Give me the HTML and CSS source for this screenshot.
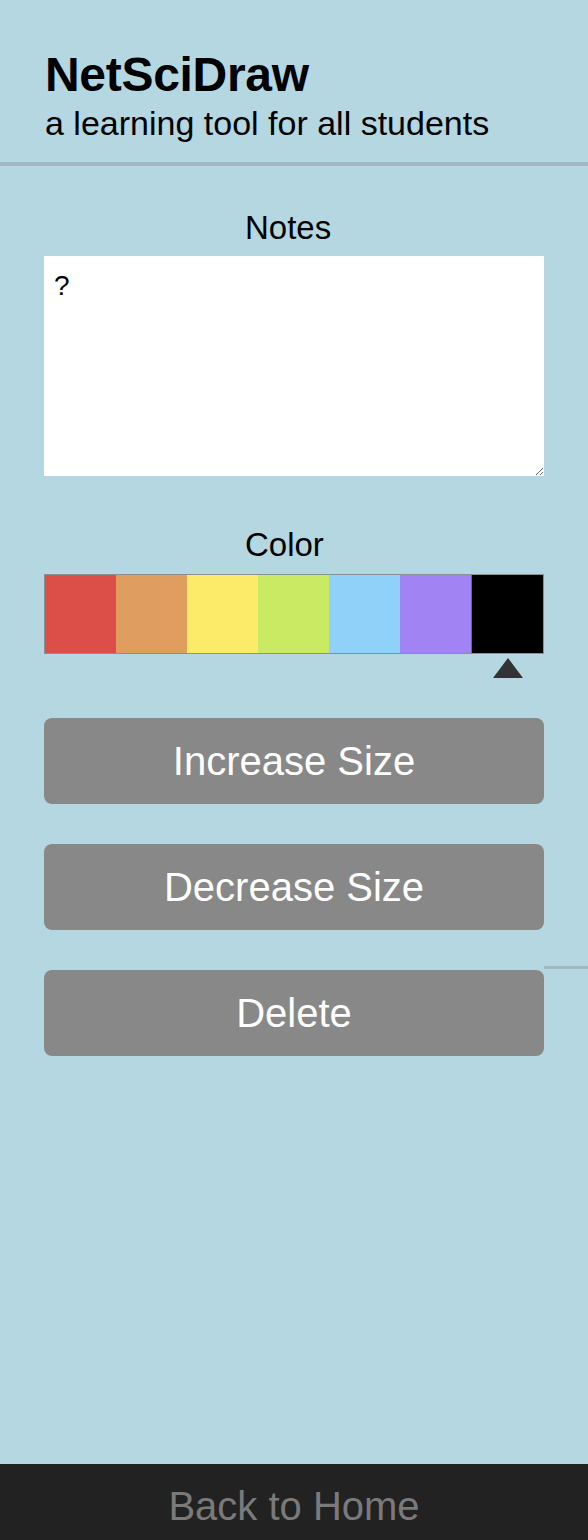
FILE: index.html
```html
<!DOCTYPE html>
<html lang="en">
<head>
<meta charset="utf-8">
<title>NetSciDraw</title>
<link rel="stylesheet" href="styles.css">
</head>
<body>
<div class="page">
  <header class="header">
    <h1 class="title">NetSciDraw</h1>
    <p class="subtitle">a learning tool for all students</p>
  </header>
  <main class="panel">
    <label class="label label-notes" for="notes">Notes</label>
    <textarea id="notes" class="notes">?</textarea>
    <div class="label label-color">Color</div>
    <div class="swatches">
      <div class="swatch red"></div>
      <div class="swatch orange"></div>
      <div class="swatch yellow"></div>
      <div class="swatch green"></div>
      <div class="swatch blue"></div>
      <div class="swatch purple"></div>
      <div class="swatch black selected"></div>
    </div>
    <div class="marker-row">
      <div class="marker-cell"></div>
      <div class="marker-cell"></div>
      <div class="marker-cell"></div>
      <div class="marker-cell"></div>
      <div class="marker-cell"></div>
      <div class="marker-cell"></div>
      <div class="marker-cell"><span class="marker"></span></div>
    </div>
    <div class="actions">
      <button class="btn">Increase Size</button>
      <button class="btn">Decrease Size</button>
      <button class="btn">Delete</button>
    </div>
    <div class="edge-line"></div>
  </main>
  <footer class="footer">
    <a class="home-link" href="#">Back to Home</a>
  </footer>
</div>
</body>
</html>
```

FILE: styles.css
```css
html, body {
  margin: 0;
  padding: 0;
}

body {
  background: #b4d7e2;
  font-family: "Liberation Sans", Arial, Helvetica, sans-serif;
  color: #000;
}

.page {
  display: flex;
  flex-direction: column;
  height: 1540px;
  position: relative;
}

.header {
  padding: 51px 45px 22px;
  border-bottom: 4px solid #a3b8c1;
}

.title {
  margin: 0;
  font-size: 48px;
  line-height: 48px;
  font-weight: bold;
  letter-spacing: -0.3px;
}

.subtitle {
  margin: 7px 0 0;
  font-size: 34px;
  line-height: 34px;
  font-weight: normal;
}

.panel {
  flex: 1;
  display: flex;
  flex-direction: column;
  padding: 45px 44px 0;
}

.label {
  display: block;
  text-align: left;
  padding-left: 201px;
  font-size: 33px;
  line-height: 33px;
}

.notes {
  display: block;
  margin-top: 12px;
  box-sizing: border-box;
  width: 500px;
  height: 220px;
  border: none;
  outline: none;
  padding: 14px 10px;
  font-family: "Liberation Sans", Arial, sans-serif;
  font-size: 28px;
  background: #fff;
  color: #000;
}

.label-color {
  margin-top: 52px;
}

.swatches {
  margin-top: 13px;
  display: flex;
  height: 78px;
  border: 1px solid #8a8f92;
}

.swatch {
  flex: 1;
}

.red { background: #db4f48; }
.orange { background: #df9e60; }
.yellow { background: #fbeb68; }
.green { background: #c9ea62; }
.blue { background: #90d1f9; }
.purple { background: #a183f4; }
.black { background: #000; border-left: 1px solid #6b6b6b; }

.marker-row {
  display: flex;
  height: 24px;
  padding-top: 4px;
}

.marker-cell {
  flex: 1;
  display: flex;
  justify-content: center;
}

.marker {
  width: 0;
  height: 0;
  border-left: 15px solid transparent;
  border-right: 15px solid transparent;
  border-bottom: 20px solid #333;
}

.actions {
  display: flex;
  flex-direction: column;
  gap: 40px;
  margin-top: 36px;
}

.btn {
  height: 86px;
  border: none;
  border-radius: 8px;
  background: #888;
  color: #fff;
  font-family: "Liberation Sans", Arial, sans-serif;
  font-size: 40px;
  cursor: pointer;
  padding: 0;
}

.edge-line {
  position: absolute;
  left: 544px;
  top: 966px;
  width: 44px;
  height: 3px;
  background: #a3b8c1;
}

.footer {
  height: 76px;
  background: #222;
  text-align: center;
  box-sizing: border-box;
  padding-top: 8px;
}

.home-link {
  color: #7a7a7a;
  text-decoration: none;
  font-size: 40px;
  line-height: 68px;
}
```
